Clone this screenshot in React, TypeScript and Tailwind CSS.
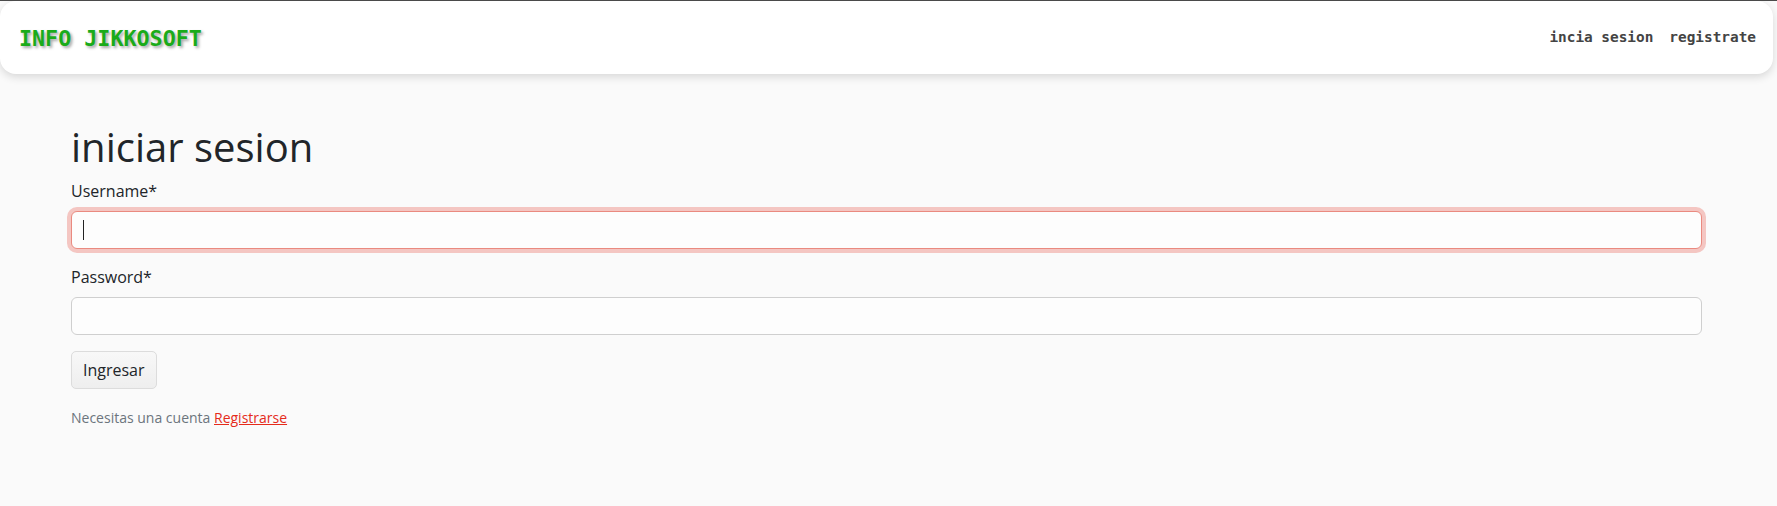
import React from 'react';

const sans = { fontFamily: '"Open Sans", "Noto Sans", sans-serif' };

function Header() {
  return (
    <header className="h-[73px] mr-[4px] bg-white rounded-[16px] shadow-[0_3px_8px_rgba(0,0,0,0.14)] flex items-center justify-between pl-[19px] pr-[17px] font-['DejaVu_Sans_Mono',monospace]">
      <a className="text-[21.7px] font-bold text-[#1aab1a] [text-shadow:2px_2px_3px_rgba(0,0,0,0.35)] leading-none mt-[2px]">
        INFO JIKKOSOFT
      </a>
      <nav className="flex items-center gap-[16px] text-[14.4px] font-bold text-[#444]">
        <a>incia sesion</a>
        <a>registrate</a>
      </nav>
    </header>
  );
}

export default function App() {
  return (
    <div className="h-[506px] overflow-hidden bg-[#fafafa] border-t border-[#4a4a4a]" style={sans}>
      <Header />
      <main className="pl-[71px] pr-[75px] pt-[49px] text-[#212529]">
        <h1 className="text-[40px] leading-[48px] font-normal mb-[8px]">iniciar sesion</h1>
        <form>
          <div className="mb-[16px]">
            <label className="block text-[16px] leading-[24px] mb-[8px]">Username*</label>
            <div className="h-[38px] rounded-[6px] border border-[#ea8a80] bg-[#fdfdfd] shadow-[0_0_0_4px_rgba(232,100,90,0.35)] flex items-center pl-[11px]">
              <span className="w-px h-[20px] bg-[#222]" />
            </div>
          </div>
          <div className="mb-[16px]">
            <label className="block text-[16px] leading-[24px] mb-[8px]">Password*</label>
            <div className="h-[38px] rounded-[6px] border border-[#cfcfcf] bg-[#fdfdfd]" />
          </div>
          <button
            type="button"
            className="h-[38px] px-[11px] rounded-[5px] border border-[#dcdcdc] bg-[#f3f3f3] bg-gradient-to-b from-[#f8f8f8] to-[#eeeeee] text-[16px] text-[#212529]"
          >
            Ingresar
          </button>
          <p className="mt-[18px] text-[14px] leading-[21px] text-[#6c757d]">
            Necesitas una cuenta <a className="text-[#e52b1b] underline">Registrarse</a>
          </p>
        </form>
      </main>
    </div>
  );
}
